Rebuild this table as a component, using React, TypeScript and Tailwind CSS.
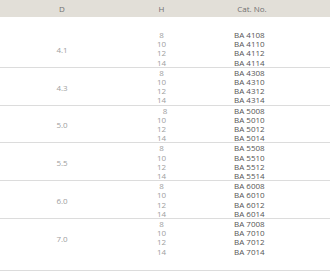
import React from "react";

const groups = [
  { d: "4.1", code: "41" },
  { d: "4.3", code: "43" },
  { d: "5.0", code: "50" },
  { d: "5.5", code: "55" },
  { d: "6.0", code: "60" },
  { d: "7.0", code: "70" },
];
const hs = ["8", "10", "12", "14"];

export default function App() {
  return (
    <div
      className="w-[333px] h-[275px] bg-white text-[8px]"
      style={{ fontFamily: '"Open Sans", "Liberation Sans", sans-serif' }}
    >
      <div className="w-[330px]">
        <div className="h-[17px] bg-[#e2dfd8] flex items-center text-[#707070]">
          <div className="w-[124px] text-center">D</div>
          <div className="w-[75px] text-center">H</div>
          <div className="w-[104px] text-center pl-[2px]">Cat. No.</div>
        </div>
        {groups.map((g, gi) => (
          <div
            key={g.d}
            className={
              "flex leading-[9.2px] border-b border-[#dcdcdc] " +
              (gi === 0 ? "pt-[13px] " : "") +
              (gi === groups.length - 1 ? "pb-[14px] " : "")
            }
          >
            <div className="w-[124px] flex items-center justify-center text-[#a0a0a0] pt-[2px]">
              {g.d}
            </div>
            <div className="w-[75px] flex flex-col items-center text-[#a0a0a0]">
              {hs.map((h, i) => (
                <div key={h} className={gi === 2 && i === 0 ? "pl-[7px]" : ""}>
                  {h}
                </div>
              ))}
            </div>
            <div className="flex flex-col pl-[35px] text-[#555555]">
              {hs.map((h) => (
                <div key={h}>
                  BA {g.code}
                  {h.padStart(2, "0")}
                </div>
              ))}
            </div>
          </div>
        ))}
      </div>
    </div>
  );
}
